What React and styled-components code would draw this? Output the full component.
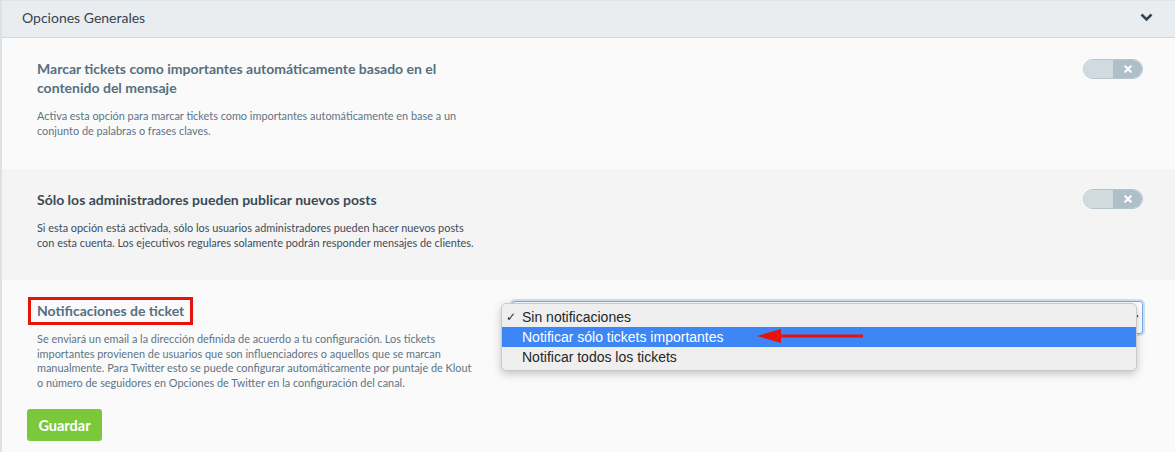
import React from 'react';
import styled, {createGlobalStyle} from "styled-components";

const GlobalStyle = createGlobalStyle`
    html, body {
        margin: 0;
        padding: 0;
        background: #fafafa;
    }
    body {
        font-family: Lato, "Open Sans", sans-serif;
        -webkit-font-smoothing: antialiased;
    }
`;

const Panel = styled.div`
    width: 1175px;
    min-height: 452px;
    box-sizing: border-box;
    border-left: 2px solid #dbe1e5;
    border-top: 1px solid #dfe4e8;
    background: #fafafa;
    overflow: hidden;
`;

const Header = styled.div`
    display: flex;
    justify-content: space-between;
    align-items: flex-start;
    height: 37px;
    box-sizing: border-box;
    padding: 8px 22px 0 20px;
    background: #e9edf0;
    border-bottom: 1px solid #d2dae0;
    font-size: 14px;
    line-height: 17px;
    color: #36444e;
`;

const Chevron = styled.svg`
    margin-top: 4px;
    display: block;
`;

const Section = styled.div`
    display: flex;
    justify-content: space-between;
    align-items: flex-start;
    padding: ${p => p.$top || 20}px 32px ${p => p.$bottom || 30}px 35px;
    background: ${p => p.$shade ? '#f4f4f4' : '#fafafa'};
`;

const TextCol = styled.div`
    width: 437px;
`;

const Title = styled.div`
    position: relative;
    display: inline-block;
    font-size: 14px;
    font-weight: 700;
    line-height: 19px;
    color: ${p => p.$dark ? '#3b4b56' : '#557080'};
    ${p => p.$marked && `
        &::after {
            content: '';
            position: absolute;
            left: -9px;
            top: -4px;
            right: -9px;
            bottom: -5px;
            border: 3px solid #e8120c;
        }
    `}
`;

const Desc = styled.p`
    margin: 12px 0 0;
    font-size: 10.9px;
    line-height: 14.5px;
    color: ${p => p.$dark ? '#3e4c57' : '#5d7484'};
`;

const Toggle = styled.div`
    display: flex;
    width: 60px;
    height: 20px;
    box-sizing: border-box;
    border: 1px solid #b6c4cc;
    border-radius: 10px;
    overflow: hidden;
`;

const ToggleOff = styled.div`
    flex: 1;
    background: #d1dadf;
`;

const ToggleKnob = styled.div`
    flex: 1;
    background: #aebfc8;
    display: flex;
    align-items: center;
    justify-content: center;
`;

const FormGrid = styled.div`
    display: grid;
    grid-template-columns: 437px 1fr;
    column-gap: 38px;
    padding: 20px 32px 12px 35px;
    background: #fafafa;
`;

const SaveButton = styled.button`
    margin-top: 19px;
    margin-left: -10px;
    width: 75px;
    height: 32px;
    border: none;
    border-radius: 3px;
    background: #7ac93a;
    color: #fff;
    font-family: Lato, sans-serif;
    font-size: 14.5px;
    font-weight: 700;
    padding: 0;
`;

const SelectWrap = styled.div`
    position: relative;
    margin-top: 1px;
`;

const SelectBox = styled.div`
    height: 33px;
    box-sizing: border-box;
    border: 1px solid #74acec;
    border-radius: 3px;
    background: #fff;
    box-shadow: 0 0 0 2px rgba(120, 175, 240, 0.35);
    display: flex;
    justify-content: flex-end;
    align-items: flex-start;
    padding: 12px 3px 0 0;
`;

const Popup = styled.ul`
    position: absolute;
    left: -11px;
    top: 2px;
    width: 634px;
    margin: 0;
    padding: 3px 0 3px;
    list-style: none;
    background: #efefef;
    border: 1px solid #c9c9c9;
    border-radius: 5px;
    box-shadow: 0 3px 9px rgba(0, 0, 0, 0.22);
    font-family: "Liberation Sans", Arial, sans-serif;
    font-size: 14px;
`;

const Option = styled.li`
    position: relative;
    height: 20px;
    line-height: 20px;
    padding-left: 20px;
    color: ${p => p.$active ? '#fff' : '#262626'};
    background: ${p => p.$active ? '#3d86f6' : 'transparent'};
`;

const Check = styled.span`
    position: absolute;
    left: 4px;
    top: 0;
    font-family: "DejaVu Sans", sans-serif;
    font-size: 12px;
`;

const Arrow = styled.svg`
    position: absolute;
    left: 255px;
    top: 24px;
`;

function Switch() {
    return (
        <Toggle>
            <ToggleOff />
            <ToggleKnob>
                <svg width="8" height="8" viewBox="0 0 8 8">
                    <path d="M1.2 1.2 L6.8 6.8 M6.8 1.2 L1.2 6.8" stroke="#fff" strokeWidth="2" strokeLinecap="round" />
                </svg>
            </ToggleKnob>
        </Toggle>
    )
}

export default function App() {
    return (
        <>
            <GlobalStyle />
            <Panel>
                <Header>
                    <span>Opciones Generales</span>
                    <Chevron width="13" height="9" viewBox="0 0 13 9">
                        <polyline points="1.5,1.5 6.5,6.5 11.5,1.5" fill="none" stroke="#36454f" strokeWidth="2.6" />
                    </Chevron>
                </Header>

                <Section $top={21} $bottom={31}>
                    <TextCol>
                        <Title>Marcar tickets como importantes automáticamente basado en el contenido del mensaje</Title>
                        <Desc>Activa esta opción para marcar tickets como importantes automáticamente en base a un conjunto de palabras o frases claves.</Desc>
                    </TextCol>
                    <Switch />
                </Section>

                <Section $shade>
                    <TextCol>
                        <Title $dark>Sólo los administradores pueden publicar nuevos posts</Title>
                        <Desc $dark>Si esta opción está activada, sólo los usuarios administradores pueden hacer nuevos posts con esta cuenta. Los ejecutivos regulares solamente podrán responder mensajes de clientes.</Desc>
                    </TextCol>
                    <Switch />
                </Section>

                <FormGrid>
                    <TextCol>
                        <Title $marked>Notificaciones de ticket</Title>
                        <Desc>Se enviará un email a la dirección definida de acuerdo a tu configuración. Los tickets importantes provienen de usuarios que son influenciadores o aquellos que se marcan manualmente. Para Twitter esto se puede configurar automáticamente por puntaje de Klout o número de seguidores en Opciones de Twitter en la configuración del canal.</Desc>
                        <SaveButton>Guardar</SaveButton>
                    </TextCol>
                    <SelectWrap>
                        <SelectBox>
                            <svg width="8" height="6" viewBox="0 0 8 6">
                                <polyline points="1,1.5 4,4.5 7,1.5" fill="none" stroke="#333" strokeWidth="1.6" />
                            </svg>
                        </SelectBox>
                        <Popup>
                            <Option><Check>✓</Check>Sin notificaciones</Option>
                            <Option $active>Notificar sólo tickets importantes</Option>
                            <Option>Notificar todos los tickets</Option>
                            <Arrow width="108" height="16" viewBox="0 0 108 16">
                                <line x1="20" y1="8" x2="106" y2="8" stroke="#e8120c" strokeWidth="3" />
                                <polygon points="0,8 24,1 24,15" fill="#e8120c" />
                            </Arrow>
                        </Popup>
                    </SelectWrap>
                </FormGrid>
            </Panel>
        </>
    )
}
